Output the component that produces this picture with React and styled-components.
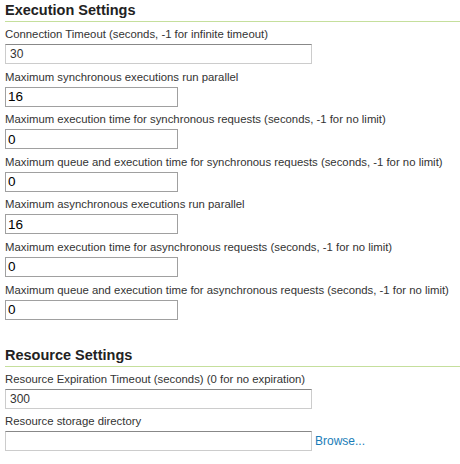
import React from "react";
import styled, { createGlobalStyle } from "styled-components";

const Global = createGlobalStyle`
  html, body { margin: 0; padding: 0; background: #fff; }
  body { font-family: "Liberation Sans", Arial, sans-serif; color: #333; }
`;

const Page = styled.div`
  padding: 0 0 0 5px;
`;

const Section = styled.section`
  margin-bottom: ${(p) => p.$mb || 0}px;
`;

const Heading = styled.h2`
  margin: 0 0 6px 0;
  padding: 2px 0 3px 0;
  font-size: 14.5px;
  line-height: 16px;
  font-weight: bold;
  color: #222;
  border-bottom: 1px solid #c5df9c;
`;

const Field = styled.div`
  margin-bottom: 6.6px;
`;

const Label = styled.label`
  display: block;
  font-size: 11.35px;
  line-height: 13px;
  margin-bottom: 3px;
  color: #333;
`;

const Row = styled.div`
  display: flex;
  align-items: center;
  gap: 3px;
`;

const Input = styled.input`
  box-sizing: border-box;
  height: 20px;
  margin: 0;
  font-family: "Liberation Sans", Arial, sans-serif;
  ${(p) =>
    p.$wide
      ? `
    width: 307px;
    border: 1px solid #ccc;
    border-top-color: #888;
    font-size: 12px;
    color: #333;
    padding: 0 4px;
  `
      : `
    width: 173px;
    border: 1px solid #a0a0a0;
    font-size: 13.5px;
    color: #000;
    padding: 0 2px;
  `}
  outline: none;
  background: #fff;
`;

const Link = styled.a`
  font-size: 12px;
  color: #1a7db8;
  text-decoration: none;
`;

const execFields = [
  ["Connection Timeout (seconds, -1 for infinite timeout)", "30", true],
  ["Maximum synchronous executions run parallel", "16"],
  ["Maximum execution time for synchronous requests (seconds, -1 for no limit)", "0"],
  ["Maximum queue and execution time for synchronous requests (seconds, -1 for no limit)", "0"],
  ["Maximum asynchronous executions run parallel", "16"],
  ["Maximum execution time for asynchronous requests (seconds, -1 for no limit)", "0"],
  ["Maximum queue and execution time for asynchronous requests (seconds, -1 for no limit)", "0"],
];

export default function App() {
  return (
    <Page>
      <Global />
      <Section $mb={25}>
        <Heading>Execution Settings</Heading>
        {execFields.map(([label, value, wide], i) => (
          <Field key={i}>
            <Label>{label}</Label>
            <Input $wide={wide} defaultValue={value} />
          </Field>
        ))}
      </Section>
      <Section>
        <Heading>Resource Settings</Heading>
        <Field>
          <Label>Resource Expiration Timeout (seconds) (0 for no expiration)</Label>
          <Input $wide defaultValue="300" />
        </Field>
        <Field>
          <Label>Resource storage directory</Label>
          <Row>
            <Input $wide defaultValue="" />
            <Link href="#">Browse...</Link>
          </Row>
        </Field>
      </Section>
    </Page>
  );
}
